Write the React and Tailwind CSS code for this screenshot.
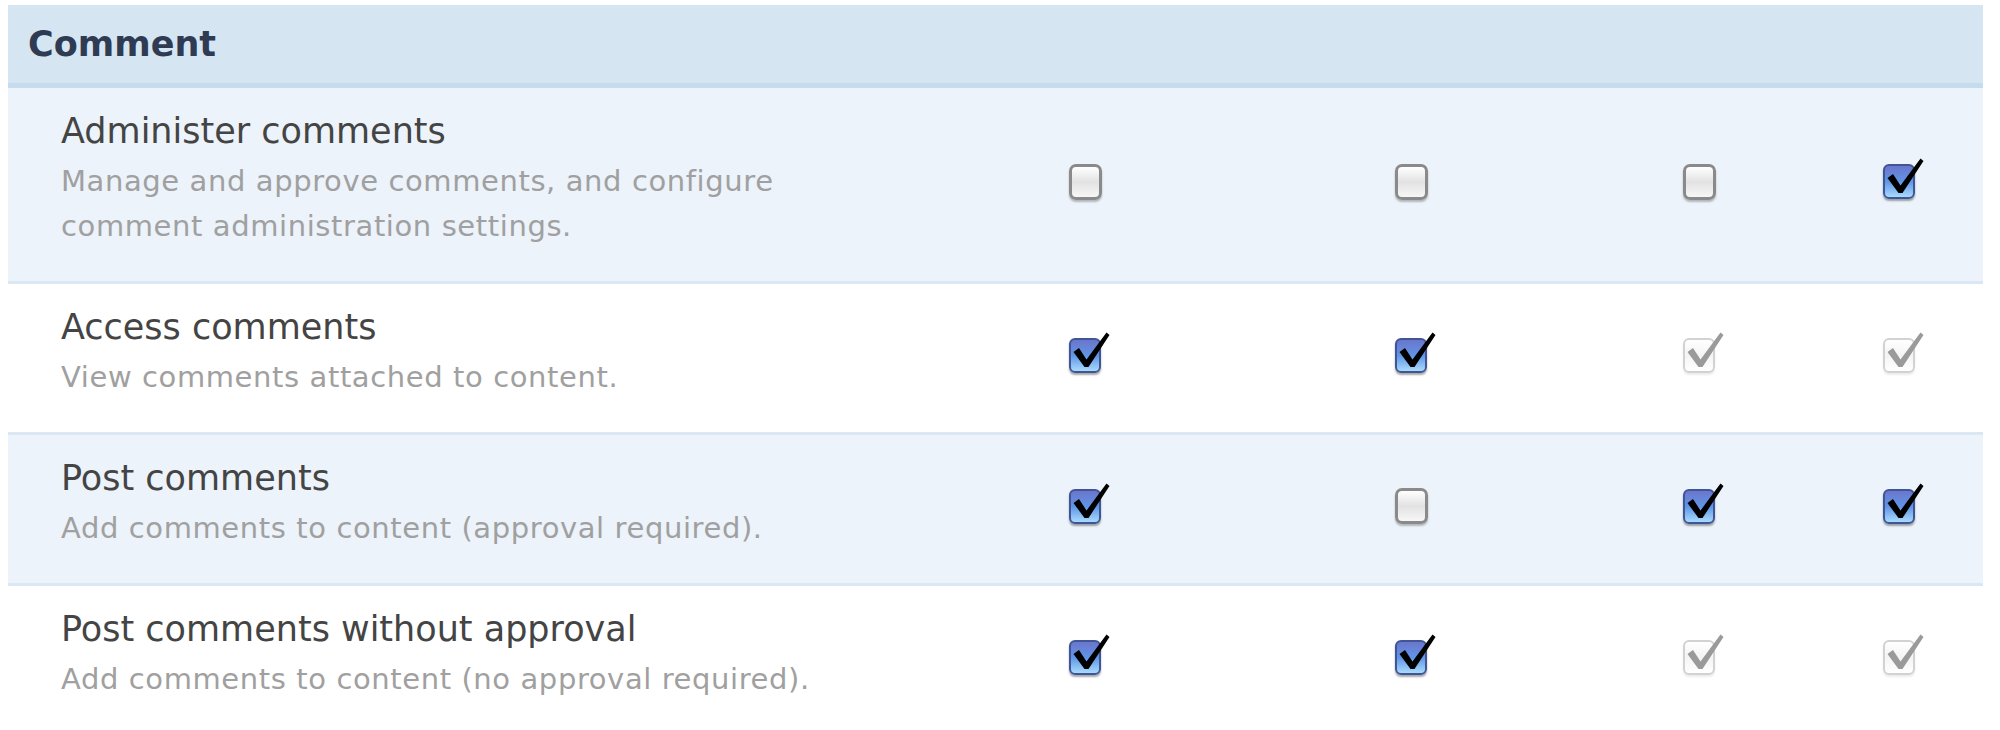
import React from 'react';

const rows = [
  {
    title: 'Administer comments',
    desc: 'Manage and approve comments, and configure comment administration settings.',
    boxes: ['off', 'off', 'off', 'on'],
  },
  {
    title: 'Access comments',
    desc: 'View comments attached to content.',
    boxes: ['on', 'on', 'locked', 'locked'],
  },
  {
    title: 'Post comments',
    desc: 'Add comments to content (approval required).',
    boxes: ['on', 'off', 'on', 'on'],
  },
  {
    title: 'Post comments without approval',
    desc: 'Add comments to content (no approval required).',
    boxes: ['on', 'on', 'locked', 'locked'],
  },
];

const Tick = ({ color }) => (
  <svg
    className="absolute left-0 top-[-10px] overflow-visible"
    width="44"
    height="46"
    viewBox="0 -10 44 46"
  >
    <path d="M2.5 12 L8 8 L15.5 19.5 L35.5 -7.5 L38.5 -5 L17.5 27 L13.5 27 Z" fill={color} />
  </svg>
);

const Checkbox = ({ state }) => {
  if (state === 'on') {
    return (
      <span className="relative block w-[32px] h-[35px] rounded-[6px] border-[2px] border-[#3f5596] bg-linear-to-b from-[#6a76cc] via-[#5f95e6] to-[#a9dafc] shadow-[0_2px_2px_rgba(0,0,0,0.35)]">
        <Tick color="#000" />
      </span>
    );
  }
  if (state === 'locked') {
    return (
      <span className="relative block w-[32px] h-[35px] rounded-[6px] border-[2px] border-[#d2d2d2] bg-linear-to-b from-white via-[#f4f4f4] to-white shadow-[0_2px_2px_rgba(0,0,0,0.08)]">
        <Tick color="#9a9a9a" />
      </span>
    );
  }
  return (
    <span className="relative block w-[33px] h-[36px] rounded-[7px] border-[3px] border-[#8a8a8a] bg-linear-to-b from-white via-[#e2e2e2] to-[#f7f7f7] shadow-[0_2px_2px_rgba(0,0,0,0.25)]" />
  );
};

const App = () => {
  return (
    <div className="min-h-[730px] bg-white pt-[5px] font-['DejaVu_Sans',Verdana,sans-serif]">
      <div className="ml-[8px] w-[1975px]">
        <div className="h-[83px] flex items-center pl-[20px] bg-[#d5e6f2] border-b-[5px] border-[#c4dcee]">
          <span className="text-[35px] font-bold text-[#2f3b53] leading-none">Comment</span>
        </div>

        {rows.map((row, i) => (
          <div
            key={row.title}
            className={`grid grid-cols-[923px_308px_344px_232px_168px] border-b-[3px] border-[#dbe8f3] ${
              i % 2 === 0 ? 'bg-[#ecf3fa]' : 'bg-white'
            }`}
          >
            <div className="pl-[53px] pt-[21px] pb-[32px]">
              <div className="text-[35px] leading-[44px] text-[#444]">{row.title}</div>
              <div className="mt-[6px] max-w-[800px] text-[29px] leading-[45px] tracking-[0.6px] text-[#a0a0a0]">
                {row.desc}
              </div>
            </div>
            {row.boxes.map((state, j) => (
              <div key={j} className="flex items-center justify-center pb-[6px]">
                <Checkbox state={state} />
              </div>
            ))}
          </div>
        ))}
      </div>
    </div>
  );
};

export default App;
